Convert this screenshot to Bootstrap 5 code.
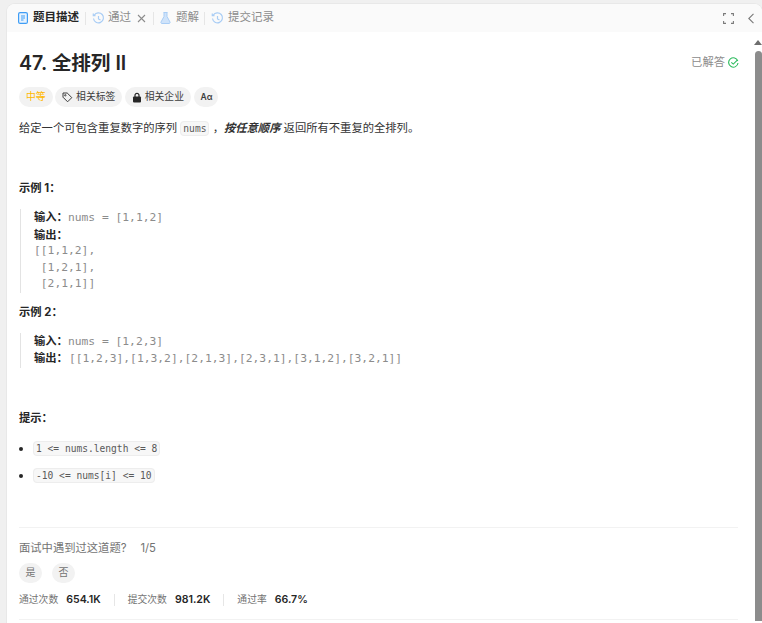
<!DOCTYPE html>
<html lang="zh"><head><meta charset="utf-8"><title>47. 全排列 II</title>
<link href="https://cdn.jsdelivr.net/npm/bootstrap@5.3.0/dist/css/bootstrap.min.css" rel="stylesheet">
<style>
html,body{height:623px;overflow:hidden}
body{background:#f0f0f0;font-family:"Inter","Noto Sans CJK SC",sans-serif;font-size:12px;color:#262626;padding:4px 0 0 7px}
.pane{height:619px;background:#fff;border-radius:8px 8px 0 0;overflow:hidden;box-shadow:0 0 0 1px #e8e8e8}
.tabbar{height:28px;background:#fafafa;padding:0 8px 0 11px;color:#8c8c8c;font-size:11.5px}
.tabbar .tb{display:flex;align-items:center;white-space:nowrap}
.tabsep{width:1px;height:13px;background:#e6e6e6}
.tb-active{color:#262626;font-weight:600}
.g5{gap:5px}.g3{gap:3px}.g4{gap:4px}
.x-ic{margin-left:3px}
.s1{margin:0 6px 0 6px}.s2{margin:0 6px 0 7px}.s3{margin:0 6px 0 5px}
.ic-full{margin-right:14px}
.bodywrap{height:591px}
.scrollcol{width:9px;flex:none;background:#fff}
.scrollup{width:0;height:0;border:4px solid transparent;border-top:0;border-bottom:5px solid #6e6e6e;margin:8px 0 0 1px}
.scrollthumb{width:7px;height:570px;margin:6px 0 0 2px;background:#8c8c8c;border-radius:4px 4px 0 0}
.content{padding:0 15px 0 12px;min-width:0}
.ptitle{font-size:19.6px;font-weight:600;line-height:28px;margin:17px 0 0;color:#262626}
.solved{color:#8c8c8c;font-size:11.3px;margin:16px -1px 0 0;height:28px;gap:3px}
.chips{margin-top:10px;gap:2.5px}
.chip{height:20px;border-radius:10px;background:#f2f2f2;padding:0 7px;font-size:9.8px;display:flex;align-items:center;gap:3px;color:#3c3c3c}
.chip-aa{font-size:8.5px;font-weight:600;padding:0 6px;margin-left:1px}
.chip-med{color:#ffb800}
.desc{font-size:11.3px;margin:12px 0 0;line-height:19px;color:#333}
.cd{font-family:"DejaVu Sans Mono","Liberation Mono",monospace;font-size:9.6px;background:#f7f7f7;border:1px solid #ededed;border-radius:4px;padding:1px 2px;color:#595959}
.ex-h{font-size:11.3px;font-weight:700;margin:0;line-height:18px;color:#262626}
.ex{border-left:1px solid #e3e3e3;margin:0 0 0 1px;padding-left:13px;font-size:11.3px;line-height:16.5px;color:#8c8c8c}
.ex b{color:#262626;font-weight:700}
.mono{font-family:"DejaVu Sans Mono","Liberation Mono",monospace;font-size:11.3px;white-space:pre;display:block}
.mono-in{font-family:"DejaVu Sans Mono","Liberation Mono",monospace;font-size:11.3px;white-space:pre}
.mono-sp{margin-left:1px}
.tips{margin:12px 0 0;padding:0 0 0 14px;font-size:11px}
.tips li{margin-bottom:8px;line-height:19px}
.tips li::marker{color:#262626}
.rule{border-top:1px solid #f2f2f2}
.ask{color:#737373;font-size:11.3px;gap:14px;line-height:16px;margin-top:12px}
.yn{gap:10px;margin-top:7px}
.ynb{width:23px;height:20px;border-radius:10px;background:#f2f2f2;color:#737373;font-size:10px;display:flex;align-items:center;justify-content:center}
.stats{font-size:9.8px;color:#737373;margin:5px 0 6px;height:25px}
.stats b{font-size:10.6px;font-weight:600;color:#262626;margin-left:8px}
.stsep{width:1px;height:12px;background:#e6e6e6;margin:0 13px}
</style></head><body>
<div class="pane d-flex flex-column">
<div class="tabbar d-flex align-items-center">
 <div class="tb tb-active g5"><svg width="10" height="12" viewBox="0 0 10 12"><rect x=".6" y=".6" width="8.8" height="10.8" rx="1.5" fill="#e8f3fe" stroke="#3f9df5" stroke-width="1.2"/><path d="M3 4h4M3 6h4M3 8h2.500" stroke="#3f9df5" stroke-width="1"/></svg>题目描述</div>
 <span class="tabsep s1"></span>
 <div class="tb g3"><svg width="13" height="13" viewBox="0 0 13 13" fill="none" stroke="#a9cdf5" stroke-width="1.2"><path d="M2.200 3.200A5 5 0 1 1 1.500 6.500"/><path d="M1.300 1.500v2.200h2.200M6.500 4v3l2 1"/></svg>通过<svg class="x-ic" width="9" height="9" viewBox="0 0 9 9" stroke="#8c8c8c" stroke-width="1.1"><path d="M1 1l7 7M8 1L1 8"/></svg></div>
 <span class="tabsep s2"></span>
 <div class="tb g5"><svg width="11" height="12" viewBox="0 0 11 12"><path d="M3.500.5h4M4 .5v4L1 10c-.3.7 0 1.500 1 1.500h7c1 0 1.300-.8 1-1.500L7 4.500v-4" fill="#cfe3fa" stroke="#a9cdf5"/></svg>题解</div>
 <span class="tabsep s3"></span>
 <div class="tb g4"><svg width="13" height="13" viewBox="0 0 13 13" fill="none" stroke="#a9cdf5" stroke-width="1.2"><path d="M2.200 3.200A5 5 0 1 1 1.500 6.500"/><path d="M1.300 1.500v2.200h2.200M6.500 4v3l2 1"/></svg>提交记录</div>
 <svg class="ms-auto ic-full" width="11" height="11" viewBox="0 0 11 11" fill="none" stroke="#7a7a7a" stroke-width="1.1"><path d="M.6 3V.6H3M8 .6h2.400V3M10.400 8v2.400H8M3 10.400H.6V8"/></svg>
 <svg width="6" height="11" viewBox="0 0 6 11" fill="none" stroke="#7a7a7a" stroke-width="1.1"><path d="M5.500.8L.8 5.500l4.700 4.700"/></svg>
</div>
<div class="bodywrap d-flex">
 <div class="content flex-grow-1">
  <div class="d-flex justify-content-between">
   <h1 class="ptitle">47. 全排列 II</h1>
   <div class="solved d-flex align-items-center">已解答<svg width="11" height="11" viewBox="0 0 11 11" fill="none" stroke="#2cbb5d" stroke-width="1.1"><path d="M9.800 4A4.700 4.700 0 1 0 10 6"/><path d="M3.300 5.300l2 1.800 4-4"/></svg></div>
  </div>
  <div class="chips d-flex">
   <span class="chip chip-med">中等</span>
   <span class="chip"><svg width="11" height="11" viewBox="0 0 11 11" fill="none" stroke="#3c3c3c"><path d="M1 1h4.200l4.600 4.600-4.200 4.200L1 5.200z"/><circle cx="3.300" cy="3.300" r=".7"/></svg>相关标签</span>
   <span class="chip"><svg width="10" height="11" viewBox="0 0 10 11"><path d="M3 5V3.300a2 2 0 0 1 4 0V5" fill="none" stroke="#262626" stroke-width="1.200"/><rect x="1" y="4.500" width="8" height="6" rx="1" fill="#262626"/></svg>相关企业</span>
   <span class="chip chip-aa">Aα</span>
  </div>
  <p class="desc">给定一个可包含重复数字的序列 <span class="cd">nums</span> ，<b><i>按任意顺序</i></b> 返回所有不重复的全排列。</p>
  <p class="ex-h" style="margin-top:41px">示例 1：</p>
  <div class="ex" style="margin-top:12px"><b>输入：</b><span class="mono-in">nums = [1,1,2]</span><br><b>输出：</b><span class="mono">[[1,1,2],
 [1,2,1],
 [2,1,1]]</span></div>
  <p class="ex-h" style="margin-top:10px">示例 2：</p>
  <div class="ex" style="margin-top:12px"><b>输入：</b><span class="mono-in">nums = [1,2,3]</span><br><b>输出：</b><span class="mono-in mono-sp">[[1,2,3],[1,3,2],[2,1,3],[2,3,1],[3,1,2],[3,2,1]]</span></div>
  <p class="ex-h" style="margin-top:41px">提示：</p>
  <ul class="tips"><li><span class="cd">1 &lt;= nums.length &lt;= 8</span></li><li><span class="cd">-10 &lt;= nums[i] &lt;= 10</span></li></ul>
  <div class="rule" style="margin-top:42px"></div>
  <div class="ask d-flex"><span>面试中遇到过这道题?</span><span>1/5</span></div>
  <div class="yn d-flex"><span class="ynb">是</span><span class="ynb">否</span></div>
  <div class="stats d-flex align-items-center"><span>通过次数<b>654.1K</b></span><span class="stsep"></span><span>提交次数<b>981.2K</b></span><span class="stsep"></span><span>通过率<b>66.7%</b></span></div>
  <div class="rule"></div>
 </div>
 <div class="scrollcol"><div class="scrollup"></div><div class="scrollthumb"></div></div>
</div>
</div>
<script src="https://cdn.jsdelivr.net/npm/bootstrap@5.3.0/dist/js/bootstrap.bundle.min.js"></script>
</body></html>
